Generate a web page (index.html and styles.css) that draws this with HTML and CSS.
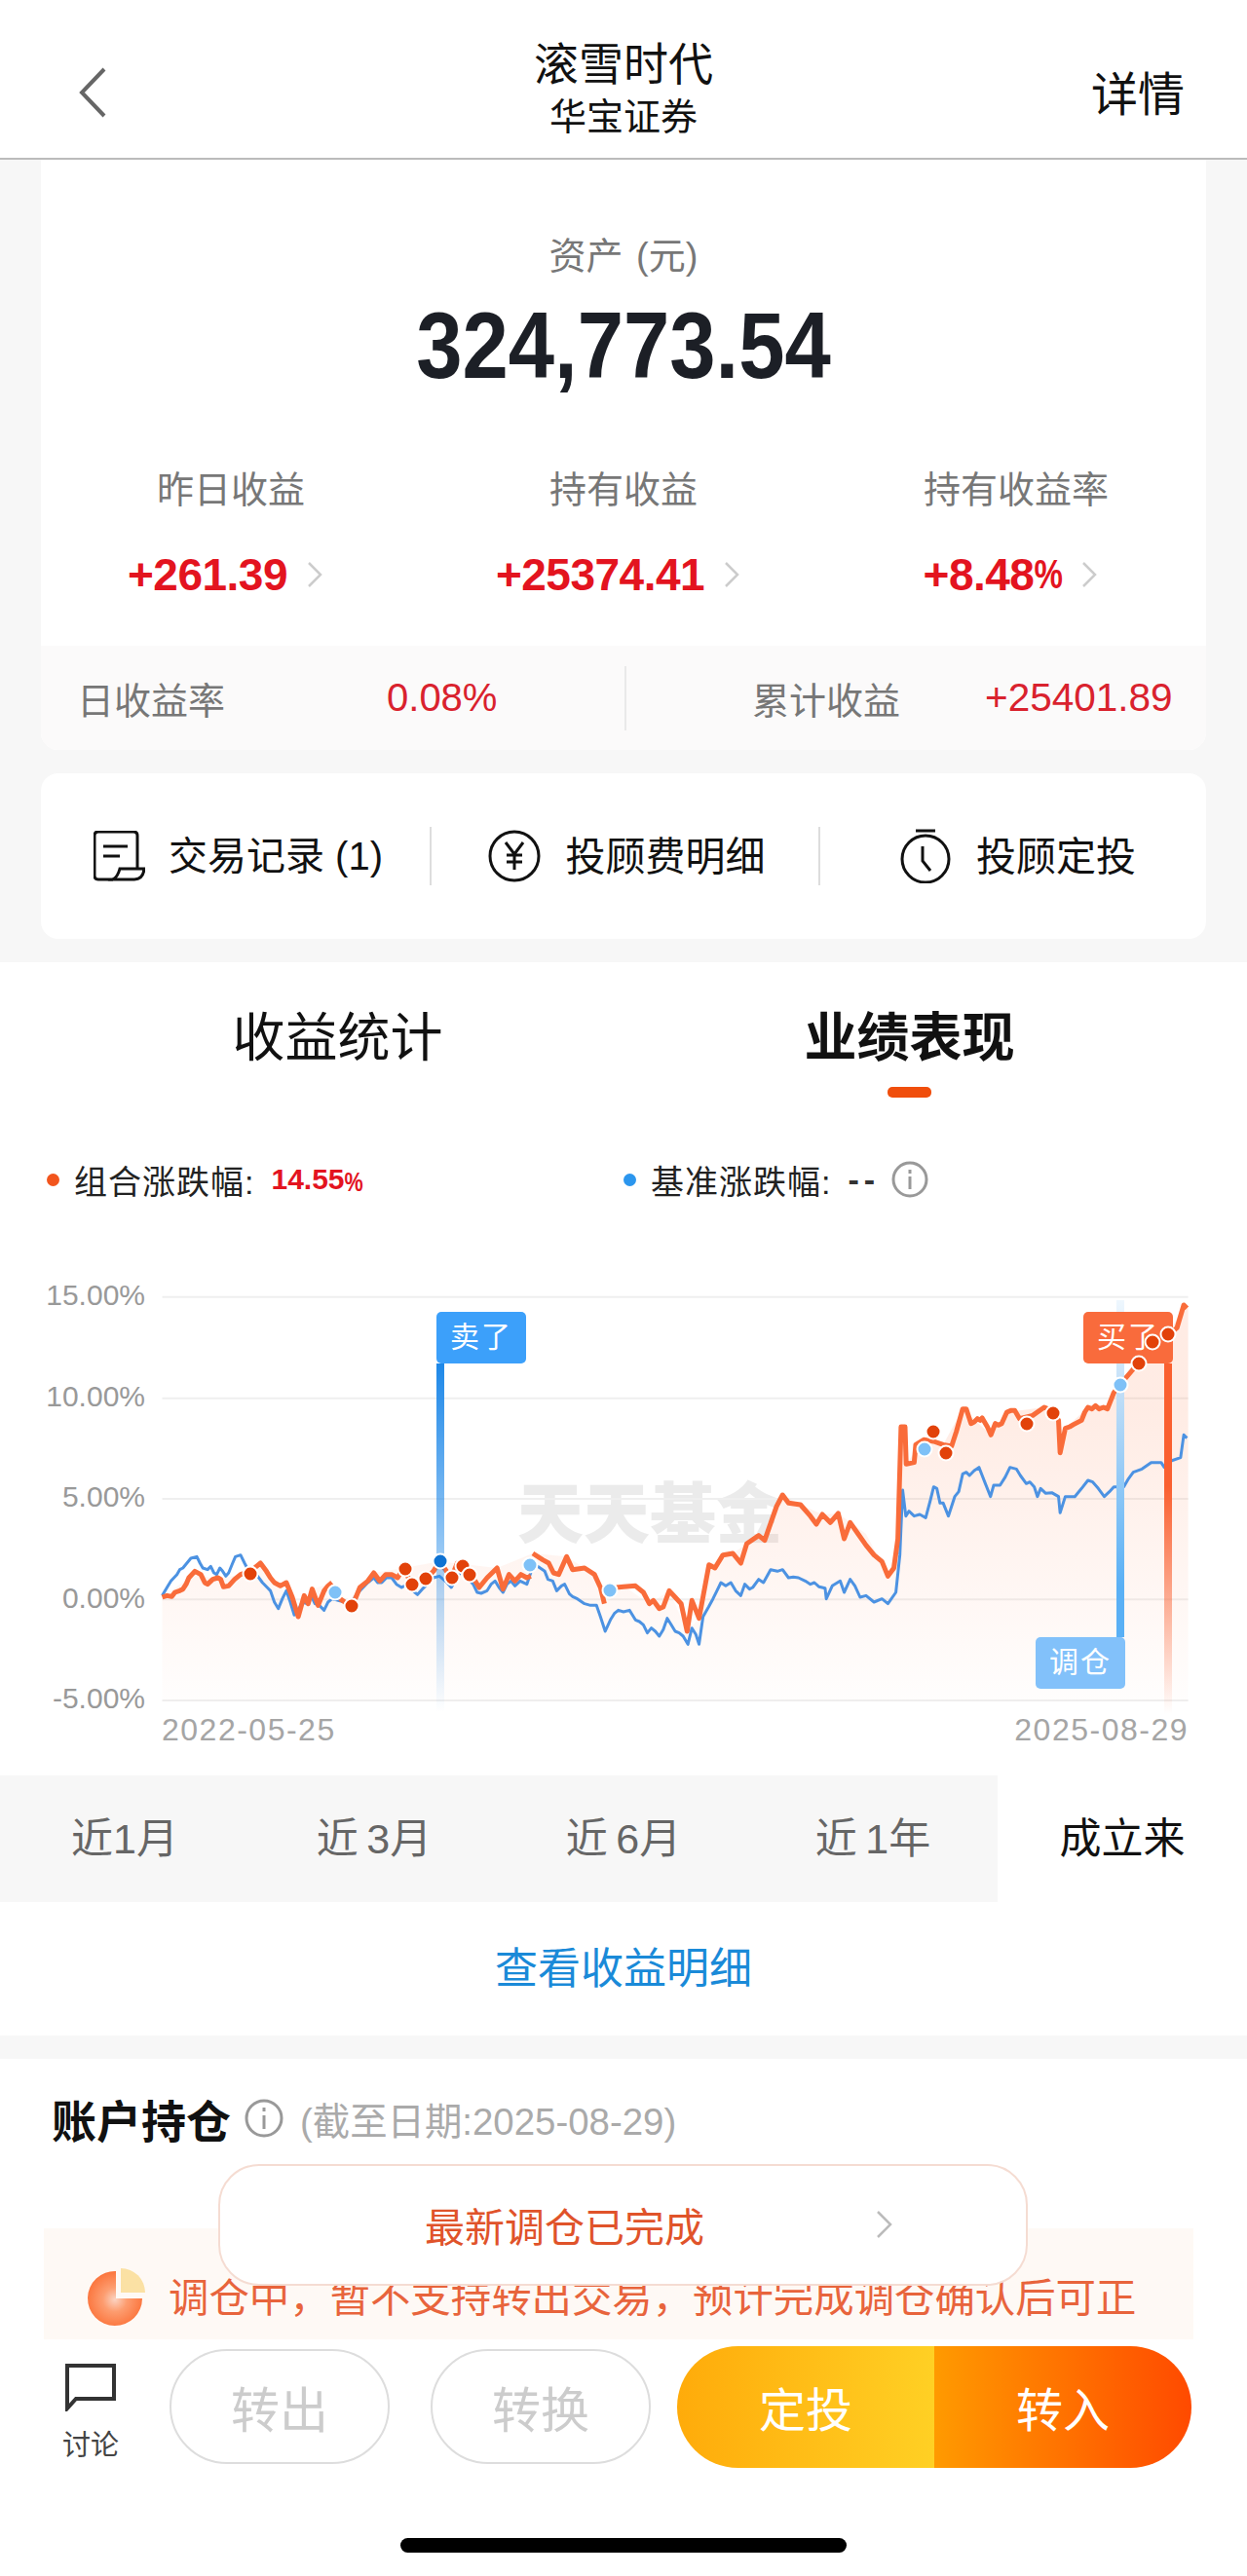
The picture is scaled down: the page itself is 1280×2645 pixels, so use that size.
FILE: index.html
```html
<!DOCTYPE html>
<html lang="zh-CN">
<head>
  <meta charset="UTF-8" />
  <meta name="viewport" content="width=device-width,initial-scale=1.0" />
  <title>滚雪时代 | 华宝证券</title>
  <link rel="stylesheet" href="styles.css">
</head>
<body>

<!-- HEADER -->
<header class="topbar">
  <div class="topbar-back">
    <svg width="30" height="52" viewBox="0 0 30 52"><path d="M27 2 L4 26 L27 50" fill="none" stroke="#666" stroke-width="4"/></svg>
  </div>
  <div class="topbar-title">
    <h1>滚雪时代</h1>
    <p>华宝证券</p>
  </div>
  <a class="topbar-detail">详情</a>
</header>

<!-- SUMMARY -->
<section class="summary">
  <div class="asset-card">
    <div class="asset-label">资产 (元)</div>
    <div class="asset-value">324,773.54</div>
    <div class="stats">
      <div class="stat">
        <div class="stat-label">昨日收益</div>
        <div class="stat-value">+261.39<svg class="stat-arrow" width="16" height="26" viewBox="0 0 16 26"><path d="M2 1 L14 13 L2 25" fill="none" stroke="#ccc" stroke-width="2.5"/></svg></div>
      </div>
      <div class="stat">
        <div class="stat-label">持有收益</div>
        <div class="stat-value">+25374.41<svg class="stat-arrow" width="16" height="26" viewBox="0 0 16 26"><path d="M2 1 L14 13 L2 25" fill="none" stroke="#ccc" stroke-width="2.5"/></svg></div>
      </div>
      <div class="stat">
        <div class="stat-label">持有收益率</div>
        <div class="stat-value">+8.48<span class="pct">%</span><svg class="stat-arrow" width="16" height="26" viewBox="0 0 16 26"><path d="M2 1 L14 13 L2 25" fill="none" stroke="#ccc" stroke-width="2.5"/></svg></div>
      </div>
    </div>
    <div class="rates">
      <div class="rate rate-day"><span>日收益率</span><b>0.08%</b></div>
      <div class="rate-sep"></div>
      <div class="rate rate-total"><span>累计收益</span><b>+25401.89</b></div>
    </div>
  </div>

  <div class="action-card">
    <div class="action action-log">
      <svg width="53" height="52" viewBox="0 0 53 52" fill="none" stroke="#111" stroke-width="3">
        <path d="M20 50 H5 Q1 50 1 46 V5 Q1 1 5 1 H41 Q45 1 45 5 V39"/>
        <path d="M27 39 H52 Q51 50 42 50 H20 Q25 47 27 39 Z"/>
        <path d="M10 16 H35 M10 26 H27"/>
      </svg>
      <span>交易记录 (1)</span>
    </div>
    <div class="action-sep"></div>
    <div class="action action-fee">
      <svg width="54" height="54" viewBox="0 0 54 54" fill="none" stroke="#111" stroke-width="3">
        <circle cx="27" cy="27" r="25"/>
        <path d="M18 13 L27 25 L36 13 M19 26 H35 M19 33 H35 M27 25 V41"/>
      </svg>
      <span>投顾费明细</span>
    </div>
    <div class="action-sep"></div>
    <div class="action action-plan">
      <svg width="52" height="56" viewBox="0 0 52 56" fill="none" stroke="#111" stroke-width="3">
        <circle cx="26" cy="31" r="24"/>
        <path d="M16 2 H36 M23 18 V33 L31 43"/>
      </svg>
      <span>投顾定投</span>
    </div>
  </div>
</section>

<!-- PERFORMANCE -->
<section class="perf">
  <div class="tabs">
    <div class="tab">收益统计</div>
    <div class="tab tab-active">业绩表现<i></i></div>
  </div>

  <div class="legend">
    <div class="legend-item"><i class="dot dot-orange"></i><span>组合涨跌幅:</span><b>14.55<span class="pct">%</span></b></div>
    <div class="legend-item"><i class="dot dot-blue"></i><span>基准涨跌幅:</span><b class="legend-none">--</b>
      <svg width="38" height="38" viewBox="0 0 38 38" fill="none" stroke="#999" stroke-width="3"><circle cx="19" cy="19" r="17"/><path d="M19 16 V29 M19 9 V13"/></svg>
    </div>
  </div>

  <div class="chart">
    <div class="y-axis">
      <span>15.00%</span><span>10.00%</span><span>5.00%</span><span>0.00%</span><span>-5.00%</span>
    </div>
    <div class="watermark">天天基金</div>

    <svg class="chart-lines" width="1280" height="480" viewBox="0 0 3136 1440" preserveAspectRatio="none">
      <defs>
        <linearGradient id="areaFill" gradientUnits="userSpaceOnUse" x1="0" y1="500" x2="0" y2="1400">
          <stop offset="0" stop-color="#ff6a30" stop-opacity="0.13"/>
          <stop offset="1" stop-color="#ff6a30" stop-opacity="0.01"/>
        </linearGradient>
      </defs>
      <g class="grid">
        <path d="M408 155 H2988 M408 467 H2988 M408 777 H2988 M408 1087 H2988 M408 1398 H2988"/>
      </g>
      <path fill="url(#areaFill)" d="M408 1400 V1080 L475 1020 490 1000 535 1025 605 1010 655 975 705 1045 750 1140 785 1055 835 1035 885 1110 940 1005 1015 990 1105 970 1250 990 1340 945 1425 955 1495 1010 1520 1100 1568 1045 1633 1100 1683 1060 1728 1185 1758 1145 1783 980 1843 945 1878 915 1923 890 1968 765 2013 795 2068 825 2108 822 2178 885 2233 1015 2258 900 2266 555 2279 670 2323 595 2372 610 2421 500 2492 580 2532 510 2626 495 2662 535 2666 635 2679 560 2736 495 2785 500 2817 425 2862 360 2940 270 2977 180 2988 190 V1400 Z"/>
      <polyline class="line-blue" points="408,1075 420,1050 430,1030 445,1010 452,995 460,990 470,975 480,960 495,955 503,975 510,990 522,995 530,985 538,1005 545,1010 553,990 560,1000 568,1015 575,1005 585,975 592,955 605,950 615,975 630,1010 648,1015 660,1035 672,1050 680,1060 690,1095 700,1115 710,1085 720,1060 730,1095 740,1135 750,1120 760,1095 772,1100 782,1075 792,1100 803,1105 815,1120 825,1095 835,1085 880,1100 905,1060 925,1035 940,1020 950,1035 960,1035 972,1020 985,1020 997,1040 1010,1050 1025,1040 1038,1060 1050,1072 1062,1055 1075,1040 1090,1020 1105,1015 1120,1030 1135,1050 1148,1020 1160,1000 1175,1020 1190,1040 1200,1065 1210,1068 1225,1060 1235,1040 1245,1030 1255,1050 1265,1065 1275,1040 1285,1030 1295,1045 1308,1030 1325,1040 1340,985 1352,985 1370,1000 1378,1025 1390,1030 1400,1060 1412,1045 1420,1040 1432,1070 1440,1078 1452,1085 1470,1100 1485,1105 1500,1105 1510,1140 1522,1185 1535,1150 1545,1130 1555,1120 1568,1125 1583,1120 1598,1150 1608,1155 1618,1165 1628,1190 1638,1175 1648,1185 1658,1200 1668,1180 1678,1145 1688,1165 1698,1185 1708,1190 1718,1200 1730,1225 1740,1175 1750,1195 1758,1225 1768,1140 1782,1110 1793,1085 1803,1060 1813,1035 1825,1045 1838,1035 1850,1060 1863,1075 1873,1040 1885,1055 1893,1050 1908,1025 1920,1035 1938,995 1955,1000 1968,995 1983,1020 1995,1018 2008,1020 2025,1030 2038,1040 2048,1035 2060,1048 2075,1052 2078,1085 2093,1045 2113,1030 2123,1065 2138,1025 2150,1045 2163,1080 2178,1075 2198,1095 2218,1085 2233,1100 2253,1065 2263,950 2270,750 2278,830 2286,815 2299,830 2313,825 2328,835 2340,780 2348,740 2356,745 2364,790 2372,790 2385,830 2401,770 2411,755 2421,700 2430,695 2438,705 2450,690 2462,680 2470,705 2478,730 2491,770 2499,735 2515,735 2528,710 2540,680 2556,685 2566,705 2581,730 2590,725 2601,740 2609,770 2617,745 2630,760 2645,758 2662,770 2666,820 2679,770 2703,770 2720,745 2736,720 2748,725 2762,745 2777,770 2790,755 2801,740 2826,740 2838,715 2850,695 2872,685 2895,665 2920,665 2928,680 2945,660 2969,650 2977,580 2985,590"/>
      <polyline class="line-orange" points="408,1080 420,1075 432,1078 440,1065 452,1060 460,1055 468,1040 475,1020 490,1000 505,1010 515,1035 522,1040 535,1025 548,1020 555,1025 562,1048 575,1045 590,1025 605,1010 630,1000 655,975 670,1000 680,1020 690,1035 705,1045 720,1035 735,1080 750,1140 765,1075 775,1100 785,1055 800,1105 815,1060 825,1045 835,1035"/>
      <polyline class="line-orange" points="855,1085 885,1110 905,1050 925,1030 940,1005 955,1030 970,1010 985,1010 1000,1020 1015,990 1035,1040 1070,1025 1090,1000 1105,970 1135,1020 1150,975 1180,1010 1195,1030 1205,1050 1225,1020 1250,990 1265,1055 1280,1010 1295,1030 1310,1010 1325,1020 1335,1015"/>
      <polyline class="line-orange" points="1340,945 1365,965 1380,975 1392,1005 1405,1010 1425,955 1440,995 1470,990 1495,1010 1510,1050 1520,1100"/>
      <polyline class="line-orange" points="1550,1050 1568,1048 1598,1045 1618,1065 1633,1100 1643,1090 1658,1115 1668,1110 1683,1060 1698,1080 1713,1100 1728,1185 1740,1090 1758,1145 1783,980 1798,990 1818,950 1843,945 1863,975 1878,915 1908,890 1923,905 1953,800 1968,765 1983,790 2013,795 2038,830 2053,855 2068,825 2088,850 2108,822 2123,900 2138,850 2158,885 2178,920 2198,950 2218,970 2233,1015 2248,990 2258,900 2266,555 2276,555 2279,670 2299,665 2303,610 2323,595 2348,600 2372,610 2393,615 2405,570 2421,500 2430,500 2442,545 2450,540 2458,530 2465,535 2470,528 2483,555 2492,580 2503,545 2511,550 2519,545 2532,510 2542,505 2552,505 2564,530 2597,520 2626,495 2646,505 2662,535 2666,635 2679,560 2690,555 2700,548 2720,535 2728,510 2736,495 2746,500 2755,490 2764,500 2775,495 2785,500 2801,450 2817,425 2862,360 2899,295 2940,270 2960,250 2977,180 2985,190"/>
    </svg>

    <div class="flag-line flag-line-sell"></div>
    <div class="flag-line flag-line-swap"></div>
    <div class="flag-line flag-line-buy"></div>
    <div class="flag flag-sell">卖了</div>
    <div class="flag flag-buy">买了</div>
    <div class="flag flag-swap">调仓</div>

    <svg class="chart-dots" width="1280" height="480" viewBox="0 1280 1280 480">
      <g class="dots-sell" stroke="#fff" stroke-width="2">
        <circle cx="257" cy="1616" r="7.5"/><circle cx="361" cy="1649" r="7.5"/><circle cx="416" cy="1611" r="7.5"/>
        <circle cx="423" cy="1627" r="7.5"/><circle cx="437" cy="1621" r="7.5"/><circle cx="464" cy="1620" r="7.5"/>
        <circle cx="475" cy="1608" r="7.5"/><circle cx="482" cy="1617" r="7.5"/><circle cx="958" cy="1470" r="7.5"/>
        <circle cx="971" cy="1492" r="7.5"/><circle cx="1054" cy="1462" r="7.5"/><circle cx="1081" cy="1451" r="7.5"/>
        <circle cx="1169" cy="1400" r="7.5"/><circle cx="1183" cy="1378" r="7.5"/><circle cx="1199" cy="1370" r="7.5"/>
      </g>
      <g fill="#7fc1f7" stroke="#fff" stroke-width="2">
        <circle cx="344" cy="1635" r="7.5"/><circle cx="544" cy="1607" r="7.5"/><circle cx="626" cy="1633" r="7.5"/>
        <circle cx="949" cy="1488" r="7.5"/><circle cx="1150" cy="1422" r="7.5"/>
      </g>
      <circle cx="452" cy="1603" r="7.5" fill="#0f72d2" stroke="#fff" stroke-width="2"/>
    </svg>
  </div>

  <div class="chart-dates"><span>2022-05-25</span><span>2025-08-29</span></div>

  <div class="ranges">
    <div class="range">近1月</div>
    <div class="range">近&thinsp;3月</div>
    <div class="range">近&thinsp;6月</div>
    <div class="range">近&thinsp;1年</div>
    <div class="range range-active">成立来</div>
  </div>

  <a class="perf-link">查看收益明细</a>
</section>

<div class="band"></div>

<!-- HOLDINGS -->
<section class="holding">
  <div class="holding-head">
    <h2>账户持仓</h2>
    <svg width="40" height="40" viewBox="0 0 40 40" fill="none" stroke="#999" stroke-width="3"><circle cx="20" cy="20" r="18"/><path d="M20 17 V31 M20 9 V13"/></svg>
    <span>(截至日期:2025-08-29)</span>
  </div>
  <div class="notice">
    <svg width="62" height="60" viewBox="0 0 62 60">
      <defs>
        <radialGradient id="pieFill" cx="0.5" cy="0.52" r="0.55">
          <stop offset="0" stop-color="#fbd3c2"/>
          <stop offset="0.4" stop-color="#fd9d70"/>
          <stop offset="1" stop-color="#fb7138"/>
        </radialGradient>
      </defs>
      <path d="M31 3 A28 28 0 1 0 58 31 H31 Z" fill="url(#pieFill)"/>
      <path d="M36 0 A25 25 0 0 1 61 25 H36 Z" fill="#fbe1a4"/>
    </svg>
    <p>调仓中，暂不支持转出交易，预计完成调仓确认后可正</p>
  </div>
  <div class="popup">
    <span>最新调仓已完成</span>
    <svg width="18" height="28" viewBox="0 0 18 28"><path d="M2 1 L15 14 L2 27" fill="none" stroke="#bbb" stroke-width="2.5"/></svg>
  </div>
</section>

<!-- BOTTOM BAR -->
<footer class="bottombar">
  <div class="discuss">
    <svg width="54" height="50" viewBox="0 0 54 50"><path d="M3 47 V3 H51 V37 H12 Z" fill="none" stroke="#333" stroke-width="4"/></svg>
    <span>讨论</span>
  </div>
  <button class="btn-ghost btn-out">转出</button>
  <button class="btn-ghost">转换</button>
  <div class="btn-pair">
    <button class="btn-plan">定投</button>
    <button class="btn-in">转入</button>
  </div>
</footer>
<div class="homebar"></div>

</body>
</html>
```

FILE: styles.css
```css
* {
  box-sizing: border-box;
  margin: 0;
  padding: 0;
}
body {
  width: 1280px;
  height: 2645px;
  overflow: hidden;
  font-family: "Liberation Sans", "Noto Sans CJK SC", sans-serif;
  background-color: #fff;
  color: #111;
}

/* HEADER */
.topbar {
  display: grid;
  grid-template-columns: 1fr auto 1fr;
  height: 164px;
  padding: 0 64px;
  border-bottom: 2px solid #bbb;
}
.topbar-back {
  padding: 69px 0 0 16px;
}
.topbar-title {
  padding-top: 38px;
  text-align: center;
}
.topbar-title h1 {
  font-size: 46px;
  line-height: 56px;
  font-weight: 400;
}
.topbar-title p {
  margin-top: 3px;
  font-size: 38px;
  line-height: 46px;
}
.topbar-detail {
  padding-top: 70px;
  text-align: right;
  font-size: 48px;
  line-height: 56px;
}

/* SUMMARY */
.summary {
  padding: 0 42px 24px;
  background-color: #f7f7f7;
}
.asset-card {
  height: 606px;
  padding-top: 74px;
  background-color: #fff;
  border-radius: 0 0 18px 18px;
  overflow: hidden;
}
.asset-label {
  text-align: center;
  font-size: 38px;
  line-height: 50px;
  word-spacing: 3px;
  color: #777;
}
.asset-value {
  margin-top: 17px;
  text-align: center;
  font-size: 85px;
  line-height: 100px;
  font-weight: 700;
  color: #1c1f26;
  transform: scaleY(1.14);
}
.stats {
  display: grid;
  grid-template-columns: repeat(3, 403px);
  justify-content: center;
  margin-top: 73px;
}
.stat {
  text-align: center;
}
.stat-label {
  font-size: 38px;
  line-height: 50px;
  color: #777;
}
.stat-value {
  display: flex;
  align-items: center;
  justify-content: center;
  margin-top: 32px;
  padding-right: 12px;
  font-size: 46px;
  line-height: 60px;
  font-weight: 700;
  letter-spacing: -0.5px;
  color: #e3141f;
}
.pct {
  display: inline-block;
  font-size: 0.72em;
  transform: scaleY(1.3);
}
.stat-arrow {
  margin-left: 20px;
}
.rates {
  display: flex;
  align-items: center;
  height: 107px;
  margin-top: 43px;
  background-color: #fbfafa;
}
.rate {
  display: flex;
  align-items: center;
  font-size: 38px;
  color: #777;
}
.rate b {
  font-size: 40px;
  font-weight: 400;
  color: #d9222e;
}
.rate-day {
  width: 599px;
  padding-left: 37px;
}
.rate-day b {
  margin-left: 166px;
}
.rate-total {
  padding-left: 129px;
}
.rate-total b {
  margin-left: 87px;
  font-size: 40.5px;
}
.rate-sep {
  width: 2px;
  height: 66px;
  background-color: #e9e9e9;
}
.action-card {
  display: flex;
  align-items: center;
  height: 170px;
  margin-top: 24px;
  background-color: #fff;
  border-radius: 18px;
}
.action {
  display: flex;
  align-items: center;
  justify-content: center;
  gap: 26px;
  font-size: 41px;
}
.action span {
  margin-top: -6px;
}
.action-log {
  width: 399px;
  padding-left: 6px;
  font-size: 40px;
  gap: 24px;
}
.action-fee {
  width: 397px;
  padding-left: 3px;
}
.action-plan {
  width: 396px;
  padding-left: 10px;
}
.action-sep {
  width: 2px;
  height: 60px;
  background-color: #ddd;
}

/* PERFORMANCE */
.tabs {
  display: grid;
  grid-template-columns: 1fr 1fr;
  padding: 48px 53px 0;
}
.tab {
  text-align: center;
  font-size: 54px;
  line-height: 60px;
}
.tab-active {
  font-weight: 700;
}
.tab-active i {
  display: block;
  width: 45px;
  height: 11px;
  margin: 20px auto 0;
  background-color: #f04e0c;
  border-radius: 5px;
}
.legend {
  display: flex;
  margin-top: 64px;
  padding-left: 48px;
}
.legend-item {
  display: flex;
  align-items: center;
  width: 592px;
  height: 40px;
  font-size: 34px;
  letter-spacing: 1px;
  color: #222;
}
.legend-item b {
  margin-left: 17px;
  font-size: 30px;
  letter-spacing: 0;
  color: #e3141f;
}
.legend-item .legend-none {
  margin-right: 12px;
  font-size: 34px;
  letter-spacing: 5px;
  color: #333;
}
.dot {
  flex-shrink: 0;
  width: 13px;
  height: 13px;
  margin-right: 15px;
  border-radius: 50%;
}
.dot-orange {
  background-color: #f2551d;
}
.dot-blue {
  background-color: #2b96ee;
}

/* CHART */
.chart {
  position: relative;
  height: 480px;
  margin-top: 49px;
}
.y-axis {
  position: absolute;
  top: -2px;
  left: 0;
  width: 149px;
  text-align: right;
  font-size: 30px;
  color: #999;
}
.y-axis span {
  display: block;
  height: 103.5px;
  line-height: 103.5px;
}
.watermark {
  position: absolute;
  top: 235px;
  left: 531px;
  font-size: 68px;
  line-height: 80px;
  font-weight: 900;
  color: #ebebeb;
}
.chart-lines,
.chart-dots {
  position: absolute;
  top: 0;
  left: 0;
}
.grid path {
  fill: none;
  stroke: #efefef;
  stroke-width: 2;
  vector-effect: non-scaling-stroke;
}
.line-blue,
.line-orange {
  fill: none;
  stroke-linejoin: round;
  vector-effect: non-scaling-stroke;
}
.line-blue {
  stroke: #4c92e2;
  stroke-width: 3;
}
.line-orange {
  stroke: #f96c3a;
  stroke-width: 5;
}
.dots-sell {
  fill: #e2420a;
}
.flag {
  position: absolute;
  width: 92px;
  height: 53px;
  text-align: center;
  font-size: 30px;
  line-height: 52px;
  letter-spacing: 2px;
  color: #fff;
  border-radius: 5px;
}
.flag-sell {
  top: 67px;
  left: 448px;
  background-color: #3ca0fa;
}
.flag-buy {
  top: 67px;
  left: 1112px;
  background-color: #f96b3c;
}
.flag-swap {
  top: 401px;
  left: 1063px;
  background-color: #82c1fa;
}
.flag-line {
  position: absolute;
  width: 8px;
}
.flag-line-sell {
  top: 120px;
  left: 448px;
  height: 358px;
  background: linear-gradient(#1e88e8, rgba(30, 136, 232, 0));
}
.flag-line-buy {
  top: 120px;
  left: 1195px;
  height: 360px;
  background: linear-gradient(#fa6030, #fa6030 35%, rgba(250, 96, 48, 0));
}
.flag-line-swap {
  top: 55px;
  left: 1146px;
  height: 346px;
  background: linear-gradient(rgba(90, 176, 245, 0.1), #bcdcf7 30%, #5ab0f5 85%);
}
.chart-dates {
  display: flex;
  justify-content: space-between;
  height: 32px;
  padding: 0 60px 0 166px;
  font-size: 32px;
  line-height: 32px;
  letter-spacing: 1.5px;
  color: #a5a5a5;
}
.ranges {
  display: grid;
  grid-template-columns: repeat(5, 256px);
  height: 130px;
  margin-top: 31px;
}
.range {
  text-align: center;
  font-size: 43px;
  line-height: 130px;
  color: #666;
  background-color: #f7f7f7;
}
.range-active {
  color: #111;
  background-color: #fff;
}
.perf-link {
  display: block;
  height: 137px;
  text-align: center;
  font-size: 44px;
  line-height: 137px;
  color: #1a8ad8;
}
.band {
  height: 24px;
  background-color: #f7f7f7;
}

/* HOLDINGS */
.holding {
  position: relative;
  height: 288px;
  padding-top: 31px;
}
.holding-head {
  display: flex;
  align-items: center;
  height: 60px;
  padding-left: 53px;
}
.holding-head h2 {
  font-size: 46px;
  margin-right: 14px;
}
.holding-head span {
  margin-left: 17px;
  font-size: 38.4px;
  color: #aaa;
}
.notice {
  display: flex;
  align-items: center;
  gap: 23px;
  height: 114px;
  margin: 83px 55px 0 45px;
  padding: 28px 0 0 43px;
  overflow: hidden;
  white-space: nowrap;
  background-color: #fef9f5;
}
.notice svg {
  flex-shrink: 0;
}
.notice p {
  margin-top: -6px;
  font-size: 41.4px;
  color: #e8643c;
}
.popup {
  position: absolute;
  top: 108px;
  left: 224px;
  display: flex;
  align-items: center;
  width: 831px;
  height: 125px;
  padding: 0 0 2px 210px;
  background-color: #fff;
  border: 2px solid #f5dcd2;
  border-radius: 42px;
}
.popup span {
  font-size: 41px;
  color: #e0532a;
}
.popup svg {
  margin-left: 176px;
}

/* BOTTOM BAR */
.bottombar {
  display: flex;
  align-items: center;
  height: 138px;
}
.discuss {
  display: flex;
  flex-direction: column;
  align-items: center;
  align-self: flex-start;
  width: 174px;
  padding: 24px 0 0 12px;
  font-size: 29px;
  color: #444;
}
.discuss span {
  margin-top: 11px;
}
.bottombar button {
  font-family: inherit;
  border: none;
}
.bottombar .btn-ghost {
  width: 226px;
  height: 118px;
  font-size: 50px;
  color: #ccc;
  background-color: #fff;
  border: 2px solid #ddd;
  border-radius: 59px;
}
.btn-out {
  margin-right: 42px;
}
.btn-pair {
  display: flex;
  width: 528px;
  height: 125px;
  margin-left: 27px;
  border-radius: 63px;
  overflow: hidden;
}
.btn-pair button {
  font-size: 48px;
  color: #fff;
}
.btn-plan {
  width: 264px;
  background: linear-gradient(90deg, #ffab0a, #ffd024);
}
.btn-in {
  width: 264px;
  background: linear-gradient(90deg, #ff9a00, #ff4a00);
}
.homebar {
  width: 458px;
  height: 15px;
  margin: 66px auto 0;
  background-color: #000;
  border-radius: 8px;
}
```
